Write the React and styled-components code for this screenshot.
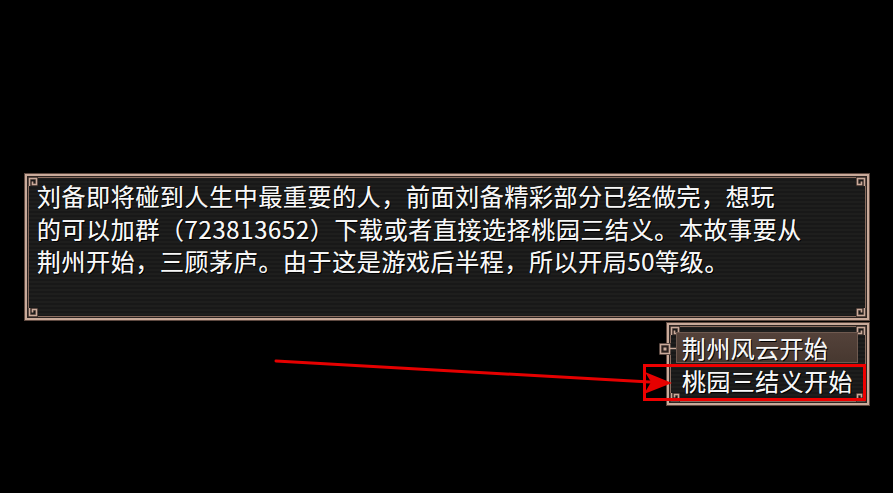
import React from "react";
import styled, { createGlobalStyle } from "styled-components";

const GlobalStyle = createGlobalStyle`
  html, body {
    margin: 0;
    padding: 0;
    background: #000;
  }
  #root {
    width: 893px;
    height: 493px;
    overflow: hidden;
  }
`;

const frameLine = "#c9aa9a";

const Stage = styled.div`
  position: relative;
  width: 893px;
  height: 493px;
  background: #000;
  font-family: "Noto Sans CJK SC", "Noto Sans", sans-serif;
  color: #f7f7f7;
  display: flex;
  flex-direction: column;
  padding-top: 173px;
  box-sizing: border-box;
`;

const Frame = styled.div`
  position: relative;
  box-sizing: border-box;
  background: repeating-linear-gradient(
    to bottom,
    #1e1e1d 0px,
    #1e1e1d 2px,
    #181818 2px,
    #181818 4px
  );
  box-shadow: inset 0 0 0 1px #5e4940, inset 0 0 0 3px ${frameLine},
    inset 0 0 0 4px #2c2320, inset 0 0 0 5px #8a6d60;
`;

const Panel = styled(Frame)`
  margin-left: 24px;
  width: 846px;
  height: 148px;
  padding: 7px 12px 0 13px;
`;

const Story = styled.p`
  margin: 0;
  font-size: 24px;
  line-height: 32.5px;
  letter-spacing: 0.6px;
  text-shadow: 1px 1px 0 #000, 0 0 0.4px #fff;
`;

const MenuRow = styled.div`
  display: flex;
  justify-content: flex-end;
  padding-right: 23px;
  margin-top: 1px;
`;

const Menu = styled(Frame)`
  width: 204px;
  height: 84px;
  padding: 9px 12px 0 10px;
  display: flex;
  flex-direction: column;
`;

const Item = styled.div`
  position: relative;
  z-index: 0;
  height: 33px;
  padding-left: 6px;
  font-size: 24px;
  line-height: 33px;
  letter-spacing: 0.4px;
  white-space: nowrap;
  text-shadow: 1px 1px 0 #000, 0 0 0.4px #fff;
  box-sizing: border-box;

  &::before {
    content: "";
    position: absolute;
    z-index: -1;
    left: 0;
    right: 0;
    top: 1px;
    bottom: 1px;
    display: ${(p) => (p.$active ? "block" : "none")};
    background: linear-gradient(#54423a, #473830);
    border: 1px solid #6f5a50;
    box-sizing: border-box;
  }
`;

const Corner = styled.svg`
  position: absolute;
  width: 13px;
  height: 13px;
  ${(p) => (p.$v === "t" ? "top: 1px;" : "bottom: 1px;")}
  ${(p) => (p.$h === "l" ? "left: 1px;" : "right: 1px;")}
  transform: scale(${(p) => (p.$h === "l" ? 1 : -1)}, ${(p) =>
    p.$v === "t" ? 1 : -1});
`;

const Knot = ({ v, h }) => (
  <Corner $v={v} $h={h} viewBox="0 0 13 13">
    <path
      d="M4.5 12V4.5H11.5V10.5H7.5V7.5"
      fill="none"
      stroke="#3a2d28"
      strokeWidth="3"
    />
    <path
      d="M4.5 12V4.5H11.5V10.5H7.5V7.5"
      fill="none"
      stroke={frameLine}
      strokeWidth="1.5"
    />
  </Corner>
);

const Corners = () => (
  <>
    <Knot v="t" h="l" />
    <Knot v="t" h="r" />
    <Knot v="b" h="l" />
    <Knot v="b" h="r" />
  </>
);

const Cursor = styled.svg`
  position: absolute;
  left: -7px;
  top: 20px;
  width: 22px;
  height: 14px;
`;

const Annotation = styled.svg`
  position: absolute;
  left: 0;
  top: 0;
  width: 893px;
  height: 493px;
  pointer-events: none;
`;

export default function App() {
  return (
    <>
      <GlobalStyle />
      <Stage>
        <Panel>
          <Corners />
          <Story>
            刘备即将碰到人生中最重要的人，前面刘备精彩部分已经做完，想玩
            <br />
            的可以加群（723813652）下载或者直接选择桃园三结义。本故事要从
            <br />
            荆州开始，三顾茅庐。由于这是游戏后半程，所以开局50等级。
          </Story>
        </Panel>
        <MenuRow>
          <Menu>
            <Corners />
            <Cursor viewBox="0 0 22 14">
              <path d="M1.5 2.5h9v9h-9z" fill="#2a211e" stroke="#3a2d28" strokeWidth="3" />
              <path
                d="M1.5 2.5h9v9h-9z"
                fill="none"
                stroke={frameLine}
                strokeWidth="1.5"
              />
              <path d="M4.5 5.5h3v3h-3z" fill={frameLine} />
              <path d="M11 6.5h11" stroke={frameLine} strokeWidth="1.5" />
            </Cursor>
            <Item $active>荆州风云开始</Item>
            <Item>桃园三结义开始</Item>
          </Menu>
        </MenuRow>
        <Annotation viewBox="0 0 893 493">
          <line
            x1="276"
            y1="361"
            x2="650"
            y2="382"
            stroke="#e60000"
            strokeWidth="3"
            strokeLinecap="round"
          />
          <polygon points="672,383 645,372 651,382 644,394" fill="#e60000" />
          <rect
            x="644.5"
            y="365.5"
            width="220"
            height="34"
            fill="none"
            stroke="#ee0000"
            strokeWidth="3"
          />
        </Annotation>
      </Stage>
    </>
  );
}
